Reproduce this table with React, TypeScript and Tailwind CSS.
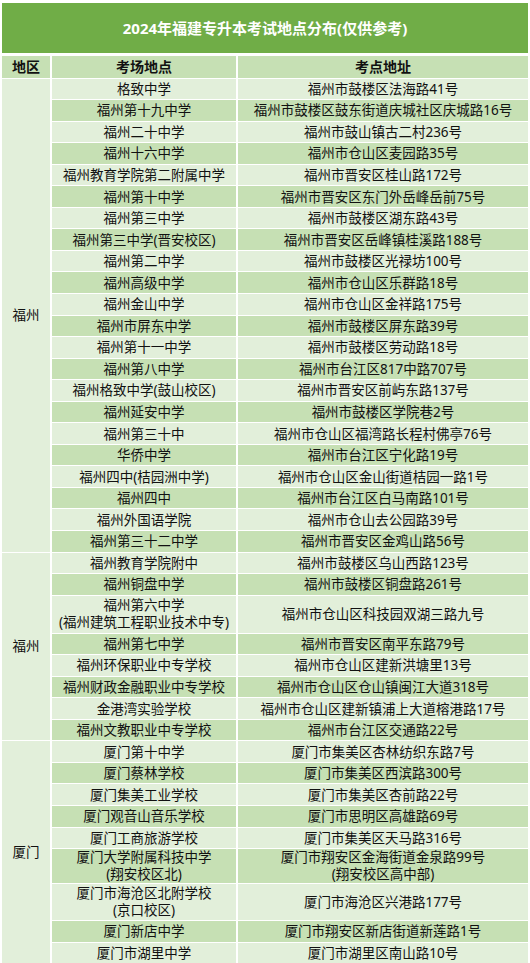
type Row = { place: string[]; addr: string[]; h?: string }

type Group = { region: string; rows: Row[] }

const groups: Group[] = [
  {
    region: "福州",
    rows: [
      { place: ["格致中学"], addr: ["福州市鼓楼区法海路41号"] },
      { place: ["福州第十九中学"], addr: ["福州市鼓楼区鼓东街道庆城社区庆城路16号"] },
      { place: ["福州二十中学"], addr: ["福州市鼓山镇古二村236号"] },
      { place: ["福州十六中学"], addr: ["福州市仓山区麦园路35号"] },
      { place: ["福州教育学院第二附属中学"], addr: ["福州市晋安区桂山路172号"] },
      { place: ["福州第十中学"], addr: ["福州市晋安区东门外岳峰岳前75号"] },
      { place: ["福州第三中学"], addr: ["福州市鼓楼区湖东路43号"] },
      { place: ["福州第三中学(晋安校区)"], addr: ["福州市晋安区岳峰镇桂溪路188号"] },
      { place: ["福州第二中学"], addr: ["福州市鼓楼区光禄坊100号"] },
      { place: ["福州高级中学"], addr: ["福州市仓山区乐群路18号"] },
      { place: ["福州金山中学"], addr: ["福州市仓山区金祥路175号"] },
      { place: ["福州市屏东中学"], addr: ["福州市鼓楼区屏东路39号"] },
      { place: ["福州第十一中学"], addr: ["福州市鼓楼区劳动路18号"] },
      { place: ["福州第八中学"], addr: ["福州市台江区817中路707号"] },
      { place: ["福州格致中学(鼓山校区)"], addr: ["福州市晋安区前屿东路137号"] },
      { place: ["福州延安中学"], addr: ["福州市鼓楼区学院巷2号"] },
      { place: ["福州第三十中"], addr: ["福州市仓山区福湾路长程村佛亭76号"] },
      { place: ["华侨中学"], addr: ["福州市台江区宁化路19号"] },
      { place: ["福州四中(桔园洲中学)"], addr: ["福州市仓山区金山街道桔园一路1号"] },
      { place: ["福州四中"], addr: ["福州市台江区白马南路101号"] },
      { place: ["福州外国语学院"], addr: ["福州市仓山去公园路39号"] },
      { place: ["福州第三十二中学"], addr: ["福州市晋安区金鸡山路56号"] },
    ],
  },
  {
    region: "福州",
    rows: [
      { place: ["福州教育学院附中"], addr: ["福州市鼓楼区乌山西路123号"] },
      { place: ["福州铜盘中学"], addr: ["福州市鼓楼区铜盘路261号"] },
      {
        place: ["福州第六中学", "(福州建筑工程职业技术中专)"],
        addr: ["福州市仓山区科技园双湖三路九号"],
        h: "h-[37px]",
      },
      { place: ["福州第七中学"], addr: ["福州市晋安区南平东路79号"] },
      { place: ["福州环保职业中专学校"], addr: ["福州市仓山区建新洪塘里13号"] },
      { place: ["福州财政金融职业中专学校"], addr: ["福州市仓山区仓山镇闽江大道318号"] },
      { place: ["金港湾实验学校"], addr: ["福州市仓山区建新镇浦上大道榕港路17号"] },
      { place: ["福州文教职业中专学校"], addr: ["福州市台江区交通路22号"] },
    ],
  },
  {
    region: "厦门",
    rows: [
      { place: ["厦门第十中学"], addr: ["厦门市集美区杏林纺织东路7号"] },
      { place: ["厦门蔡林学校"], addr: ["厦门市集美区西滨路300号"] },
      { place: ["厦门集美工业学校"], addr: ["厦门市集美区杏前路22号"] },
      { place: ["厦门观音山音乐学校"], addr: ["厦门市思明区高雄路69号"] },
      { place: ["厦门工商旅游学校"], addr: ["厦门市集美区天马路316号"] },
      {
        place: ["厦门大学附属科技中学", "(翔安校区北)"],
        addr: ["厦门市翔安区金海街道金泉路99号", "(翔安校区高中部)"],
        h: "h-[34px]",
      },
      {
        place: ["厦门市海沧区北附学校", "(京口校区)"],
        addr: ["厦门市海沧区兴港路177号"],
        h: "h-[36px]",
      },
      { place: ["厦门新店中学"], addr: ["厦门市翔安区新店街道新莲路1号"] },
      { place: ["厦门市湖里中学"], addr: ["厦门市湖里区南山路10号"] },
    ],
  },
]

function Lines({ lines }: { lines: string[] }) {
  if (lines.length === 1) return <>{lines[0]}</>
  return (
    <div className="leading-[17px]">
      {lines.map((l) => (
        <div key={l}>{l}</div>
      ))}
    </div>
  )
}

export default function App() {
  return (
    <div
      className="w-[530px] bg-white text-[#111] text-[13.5px]"
      style={{ fontFamily: '"Noto Sans", "Noto Sans CJK SC", sans-serif' }}
    >
      <div className="mx-[2px] mt-[3px] flex h-[50px] items-center justify-center bg-[#70ad47] text-[15px] font-bold text-white">
        2024年福建专升本考试地点分布(仅供参考)
      </div>
      <table className="mt-[2px] w-full table-fixed border-separate border-spacing-x-[2px] border-spacing-y-[1px] text-center">
        <colgroup>
          <col className="w-[48px]" />
          <col className="w-[184px]" />
          <col className="w-[290px]" />
        </colgroup>
        <thead>
          <tr className="bg-[#c6e0b4] text-[14px] font-bold">
            <th className="h-[21.5px] p-0 leading-[21px]">地区</th>
            <th className="h-[21.5px] p-0 leading-[21px]">考场地点</th>
            <th className="h-[21.5px] p-0 leading-[21px]">考点地址</th>
          </tr>
        </thead>
        <tbody>
          {groups.map((g, gi) =>
            g.rows.map((r, i) => {
              const bg = i % 2 === 0 ? "bg-[#e2efda]" : "bg-[#c6e0b4]"
              const h = r.h ?? "h-[20.55px]"
              return (
                <tr key={`${gi}-${i}`}>
                  {i === 0 && (
                    <td rowSpan={g.rows.length} className="bg-[#e2efda] p-0 align-middle">
                      {g.region}
                    </td>
                  )}
                  <td className={`${bg} ${h} whitespace-nowrap p-0 leading-[20px]`}>
                    <Lines lines={r.place} />
                  </td>
                  <td className={`${bg} ${h} whitespace-nowrap p-0 leading-[20px]`}>
                    <Lines lines={r.addr} />
                  </td>
                </tr>
              )
            })
          )}
        </tbody>
      </table>
    </div>
  )
}
